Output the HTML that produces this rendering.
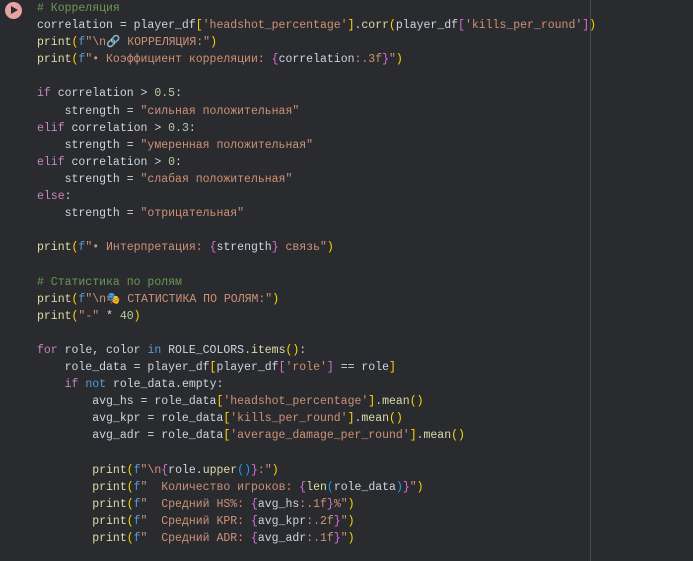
<html><head><style>
body{margin:0;background:#2a2b2e;width:693px;height:561px;overflow:hidden;position:relative}
pre{position:absolute;left:37px;top:0px;margin:0;font-family:"Liberation Mono","DejaVu Sans Mono",monospace;font-size:11.5px;line-height:17.1px;color:#cdd5e0}
.c{color:#6a9955}.s{color:#ce9178}.f{color:#dcdcaa}.k{color:#c586c0}.b{color:#569cd6}.n{color:#b5cea8}
.y{color:#ffd700}.p{color:#da70d6}.l{color:#179fff}
#ruler{position:absolute;left:590px;top:0;width:1px;height:561px;background:#4a4b4e}
#run{position:absolute;left:5px;top:2px;width:17px;height:17px;border-radius:50%;background:#e6a3a3}
#run:after{content:"";position:absolute;left:6px;top:4px;border-left:7px solid #2a2b2e;border-top:4.5px solid transparent;border-bottom:4.5px solid transparent}
</style></head><body>
<div id="ruler"></div><div id="run"></div>
<pre><span class="c"># Корреляция</span>
correlation = player_df<span class="y">[</span><span class="s">'headshot_percentage'</span><span class="y">]</span>.<span class="f">corr</span><span class="y">(</span>player_df<span class="p">[</span><span class="s">'kills_per_round'</span><span class="p">]</span><span class="y">)</span>
<span class="f">print</span><span class="y">(</span><span class="b">f</span><span class="s">"\n🔗 КОРРЕЛЯЦИЯ:"</span><span class="y">)</span>
<span class="f">print</span><span class="y">(</span><span class="b">f</span><span class="s">"• Коэффициент корреляции: </span><span class="p">{</span>correlation<span class="s">:.3f</span><span class="p">}</span><span class="s">"</span><span class="y">)</span>

<span class="k">if</span> correlation &gt; <span class="n">0.5</span>:
    strength = <span class="s">"сильная положительная"</span>
<span class="k">elif</span> correlation &gt; <span class="n">0.3</span>:
    strength = <span class="s">"умеренная положительная"</span>
<span class="k">elif</span> correlation &gt; <span class="n">0</span>:
    strength = <span class="s">"слабая положительная"</span>
<span class="k">else</span>:
    strength = <span class="s">"отрицательная"</span>

<span class="f">print</span><span class="y">(</span><span class="b">f</span><span class="s">"• Интерпретация: </span><span class="p">{</span>strength<span class="p">}</span><span class="s"> связь"</span><span class="y">)</span>

<span class="c"># Статистика по ролям</span>
<span class="f">print</span><span class="y">(</span><span class="b">f</span><span class="s">"\n🎭 СТАТИСТИКА ПО РОЛЯМ:"</span><span class="y">)</span>
<span class="f">print</span><span class="y">(</span><span class="s">"-"</span> * <span class="n">40</span><span class="y">)</span>

<span class="k">for</span> role, color <span class="b">in</span> ROLE_COLORS.<span class="f">items</span><span class="y">()</span>:
    role_data = player_df<span class="y">[</span>player_df<span class="p">[</span><span class="s">'role'</span><span class="p">]</span> == role<span class="y">]</span>
    <span class="k">if</span> <span class="b">not</span> role_data.empty:
        avg_hs = role_data<span class="y">[</span><span class="s">'headshot_percentage'</span><span class="y">]</span>.<span class="f">mean</span><span class="y">()</span>
        avg_kpr = role_data<span class="y">[</span><span class="s">'kills_per_round'</span><span class="y">]</span>.<span class="f">mean</span><span class="y">()</span>
        avg_adr = role_data<span class="y">[</span><span class="s">'average_damage_per_round'</span><span class="y">]</span>.<span class="f">mean</span><span class="y">()</span>

        <span class="f">print</span><span class="y">(</span><span class="b">f</span><span class="s">"\n</span><span class="p">{</span>role.<span class="f">upper</span><span class="l">()</span><span class="p">}</span><span class="s">:"</span><span class="y">)</span>
        <span class="f">print</span><span class="y">(</span><span class="b">f</span><span class="s">"  Количество игроков: </span><span class="p">{</span><span class="f">len</span><span class="l">(</span>role_data<span class="l">)</span><span class="p">}</span><span class="s">"</span><span class="y">)</span>
        <span class="f">print</span><span class="y">(</span><span class="b">f</span><span class="s">"  Средний HS%: </span><span class="p">{</span>avg_hs<span class="s">:.1f</span><span class="p">}</span><span class="s">%"</span><span class="y">)</span>
        <span class="f">print</span><span class="y">(</span><span class="b">f</span><span class="s">"  Средний KPR: </span><span class="p">{</span>avg_kpr<span class="s">:.2f</span><span class="p">}</span><span class="s">"</span><span class="y">)</span>
        <span class="f">print</span><span class="y">(</span><span class="b">f</span><span class="s">"  Средний ADR: </span><span class="p">{</span>avg_adr<span class="s">:.1f</span><span class="p">}</span><span class="s">"</span><span class="y">)</span>
</pre>
</body></html>
